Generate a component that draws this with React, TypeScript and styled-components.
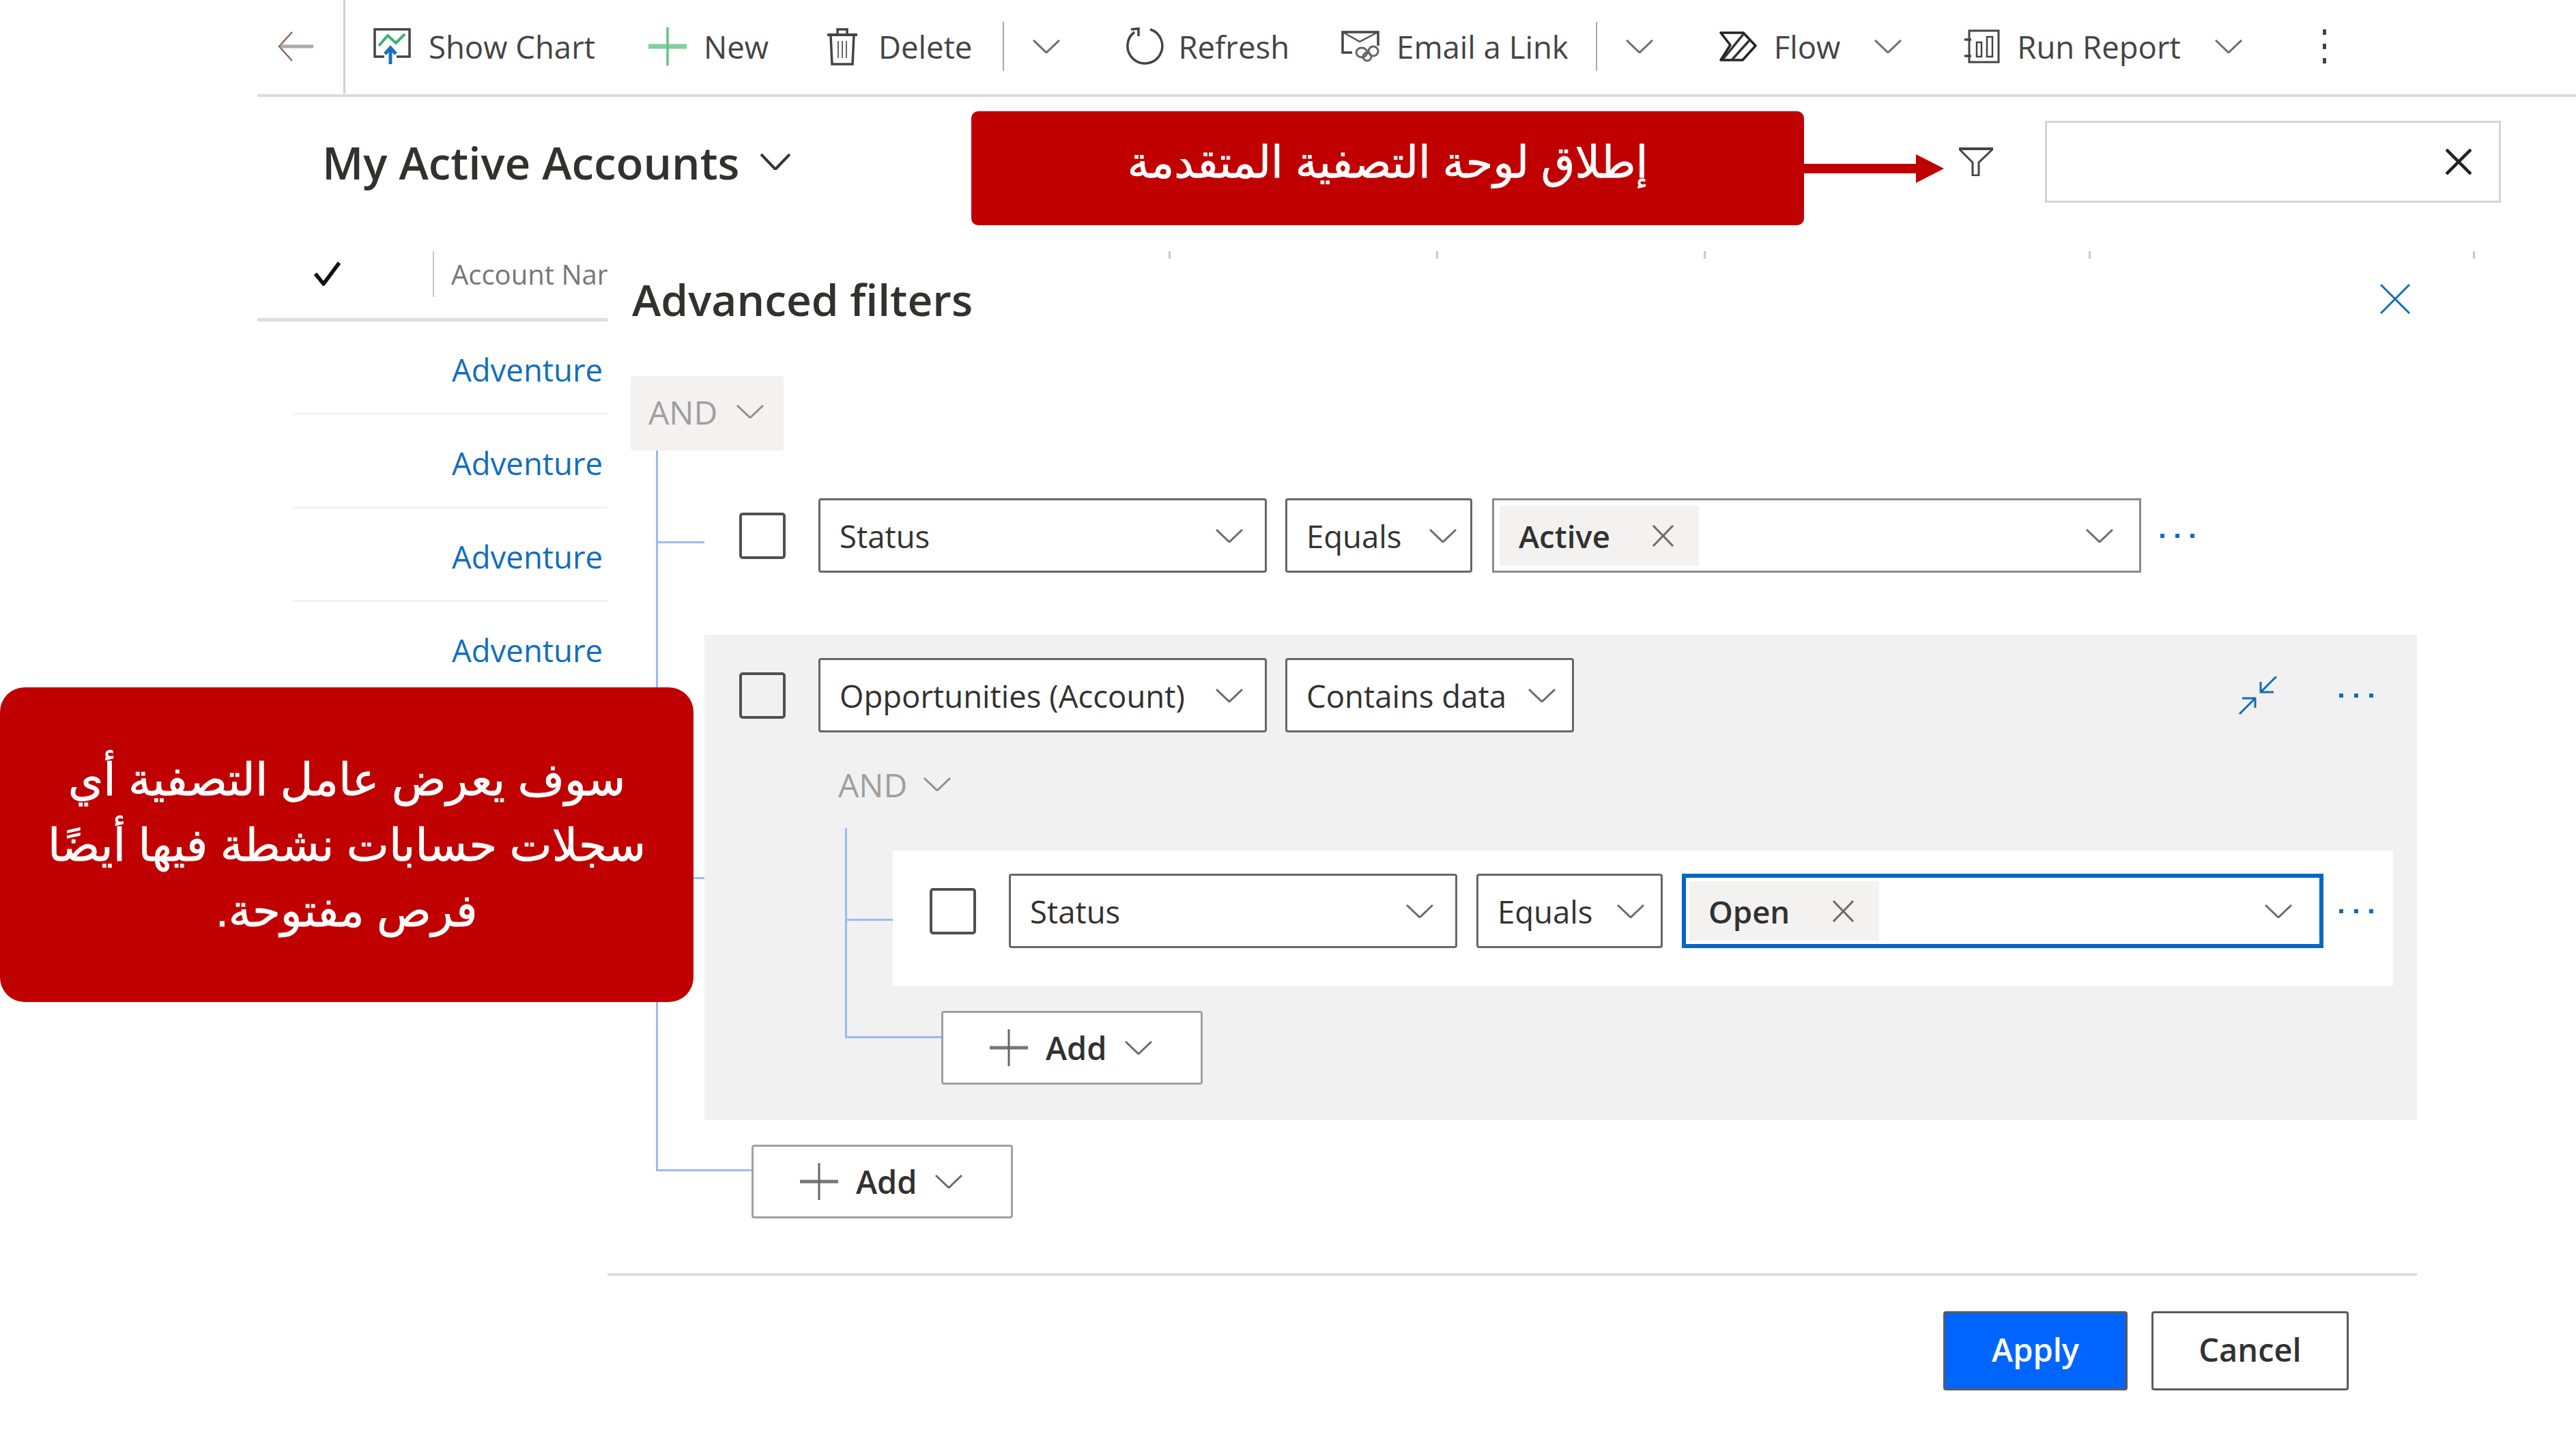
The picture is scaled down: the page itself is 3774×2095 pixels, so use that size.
import styled, { createGlobalStyle } from "styled-components";

const GlobalStyle = createGlobalStyle`
    html, body {
        margin: 0;
        padding: 0;
        background: #fff;
    }
    * {
        box-sizing: border-box;
    }
`;

const UI_FONT = `"Open Sans", "Noto Sans", sans-serif`;
const LINE_BLUE = "#9abaf5";

const Chevron = ({ color = "#6a6a78", w = 40, h = 20, sw = 3 }: { color?: string; w?: number; h?: number; sw?: number }) => (
    <svg width={w} height={h} viewBox={`0 0 ${w} ${h}`} fill="none" style={{ flex: "none" }}>
        <polyline points={`1,1 ${w / 2},${h - 1} ${w - 1},1`} stroke={color} strokeWidth={sw} />
    </svg>
);

const Dots = () => (
    <svg width="50" height="8" viewBox="0 0 50 8" style={{ flex: "none" }}>
        <rect x="0" y="1" width="6" height="6" fill="#0f6cbd" />
        <rect x="22" y="1" width="6" height="6" fill="#0f6cbd" />
        <rect x="44" y="1" width="6" height="6" fill="#0f6cbd" />
    </svg>
);

const ChipX = () => (
    <svg width="33" height="32" viewBox="0 0 33 32" fill="none" style={{ flex: "none" }}>
        <path d="M2 1 L31 31 M31 1 L2 31" stroke="#6b6b6b" strokeWidth="3" />
    </svg>
);

const AddPlus = () => (
    <svg width="56" height="54" viewBox="0 0 56 54" fill="none" style={{ flex: "none" }}>
        <path d="M0 27 H56" stroke="#777" strokeWidth="5" />
        <path d="M28 0 V54" stroke="#666" strokeWidth="3" />
    </svg>
);

const CompressIcon = () => (
    <svg width="58" height="56" viewBox="0 0 58 56" fill="none" style={{ flex: "none" }}>
        <path d="M56 0 L33 23 M33 8 V23 H52" stroke="#0f6cbd" strokeWidth="3" />
        <path d="M2 55 L25 32 M6 32 H25 V46" stroke="#0f6cbd" strokeWidth="3" />
    </svg>
);

const ChartIcon = () => (
    <svg width="56" height="54" viewBox="0 0 56 54" fill="none">
        <path d="M16 42 H2 V2 H53 V42 H34" stroke="#444" strokeWidth="3.5" />
        <path d="M8 26 L21 11 L33 22 L46 9" stroke="#3cb371" strokeWidth="4" />
        <path d="M25 53 V30 M17 38 L25 29 L33 38" stroke="#1a6fc0" strokeWidth="5" />
    </svg>
);

const PlusIcon = () => (
    <svg width="56" height="56" viewBox="0 0 56 56" fill="none">
        <path d="M0 28 H56" stroke="#7fd09c" strokeWidth="7" />
        <path d="M28 0 V56" stroke="#62c486" strokeWidth="3.5" />
    </svg>
);

const TrashIcon = () => (
    <svg width="46" height="56" viewBox="0 0 46 56" fill="none">
        <path d="M1 11 H45" stroke="#444" strokeWidth="4" />
        <path d="M16 11 V3 H30 V11" stroke="#444" strokeWidth="3.5" />
        <path d="M6 11 L8 54 H38 L40 11" stroke="#444" strokeWidth="3.5" />
        <path d="M17 20 V45 M23 20 V45 M29 20 V45" stroke="#666" strokeWidth="2" />
    </svg>
);

const RefreshIcon = () => (
    <svg width="56" height="56" viewBox="0 0 56 56" fill="none">
        <path d="M35 3 A25.5 25.5 0 1 1 12 7" stroke="#444" strokeWidth="3.5" />
        <path d="M7 3 L18 2 V13" stroke="#444" strokeWidth="3.5" />
    </svg>
);

const EmailIcon = () => (
    <svg width="56" height="46" viewBox="0 0 56 46" fill="none">
        <path d="M16 32 H2 V2 H54 V22" stroke="#444" strokeWidth="3.5" />
        <path d="M4 3 L27 16 L52 3" stroke="#555" strokeWidth="2.5" />
        <ellipse cx="30" cy="32" rx="8" ry="7" stroke="#666" strokeWidth="3" />
        <ellipse cx="38" cy="38" rx="6" ry="6" stroke="#666" strokeWidth="3" />
        <ellipse cx="47" cy="30" rx="7" ry="7" stroke="#666" strokeWidth="3" />
    </svg>
);

const FlowIcon = () => (
    <svg width="56" height="46" viewBox="0 0 56 46" fill="none">
        <path d="M3 3 H36 L54 22 L35 43 H3 L17 21 Z" stroke="#222" strokeWidth="3.5" strokeLinejoin="round" />
        <path d="M37 4 L6 42 M46 13 L19 43" stroke="#333" strokeWidth="3.5" />
    </svg>
);

const ReportIcon = () => (
    <svg width="52" height="50" viewBox="0 0 52 50" fill="none">
        <path d="M7 2 H50 V48 H7 Z" stroke="#444" strokeWidth="3" />
        <path d="M0 15 H10 M0 39 H10" stroke="#444" strokeWidth="3.5" />
        <rect x="18" y="19" width="7" height="21" stroke="#444" strokeWidth="2.5" />
        <rect x="33" y="11" width="8" height="29" stroke="#444" strokeWidth="2.5" />
    </svg>
);

const FilterIcon = () => (
    <svg width="52" height="42" viewBox="0 0 52 42" fill="none">
        <path d="M1 2 H51" stroke="#444" strokeWidth="4" />
        <path d="M2 3 L21 22 V41 H30 V22 L50 3" stroke="#444" strokeWidth="3" />
    </svg>
);

const CloseIcon = ({ size, color, sw }: { size: number; color: string; sw: number }) => (
    <svg width={size} height={size} viewBox={`0 0 ${size} ${size}`} fill="none" style={{ flex: "none" }}>
        <path d={`M1 1 L${size - 1} ${size - 1} M${size - 1} 1 L1 ${size - 1}`} stroke={color} strokeWidth={sw} />
    </svg>
);

const CalloutArrow = () => (
    <svg width="205" height="42" viewBox="0 0 205 42">
        <path d="M0 14 H164 V0 L205 21 L164 42 V28 H0 Z" fill="#c00000" />
    </svg>
);

const App = () => {
    return (
        <Page>
            <GlobalStyle />
            <Toolbar>
                <BackButton>
                    <svg width="52" height="44" viewBox="0 0 52 44" fill="none">
                        <path d="M21 1 L2 22 L21 43" stroke="#8a6a5a" strokeWidth="2.5" />
                        <path d="M4 22 H52" stroke="#aaa" strokeWidth="5" />
                    </svg>
                </BackButton>
                <ToolButton $left={41}>
                    <ChartIcon />
                    Show Chart
                </ToolButton>
                <ToolButton $left={78}>
                    <PlusIcon />
                    New
                </ToolButton>
                <ToolButton $left={85} $gap={30}>
                    <TrashIcon />
                    Delete
                </ToolButton>
                <ToolDivider $left={45} />
                <ToolChevron $left={42}>
                    <Chevron />
                </ToolChevron>
                <ToolButton $left={97} $gap={20}>
                    <RefreshIcon />
                    Refresh
                </ToolButton>
                <ToolButton $left={76}>
                    <EmailIcon />
                    Email a Link
                </ToolButton>
                <ToolDivider $left={40} />
                <ToolChevron $left={42}>
                    <Chevron />
                </ToolChevron>
                <ToolButton $left={96}>
                    <FlowIcon />
                    Flow
                </ToolButton>
                <ToolChevron $left={50}>
                    <Chevron />
                </ToolChevron>
                <ToolButton $left={92}>
                    <ReportIcon />
                    Run Report
                </ToolButton>
                <ToolChevron $left={50}>
                    <Chevron />
                </ToolChevron>
                <Kebab>
                    <span />
                    <span />
                    <span />
                </Kebab>
            </Toolbar>

            <ViewBar>
                <ViewTitle>
                    My Active Accounts
                    <Chevron color="#333" w={44} h={24} sw={4} />
                </ViewTitle>
                <FilterButton>
                    <FilterIcon />
                </FilterButton>
                <SearchBox>
                    <CloseIcon size={38} color="#222" sw={4.5} />
                </SearchBox>
            </ViewBar>

            <Workspace>
                <GridColumn>
                    <GridHeader>
                        <CheckCell>
                            <svg width="40" height="36" viewBox="0 0 40 36" fill="none">
                                <path d="M2 18 L14 33 L37 2" stroke="#111" strokeWidth="5.5" />
                            </svg>
                        </CheckCell>
                        <HeaderName>Account Name</HeaderName>
                    </GridHeader>
                    <GridRow>Adventure</GridRow>
                    <GridRow>Adventure</GridRow>
                    <GridRow>Adventure</GridRow>
                    <GridRow>Adventure</GridRow>
                </GridColumn>

                <Panel>
                    <ColumnTicks>
                        <span />
                        <span />
                        <span />
                        <span />
                        <span />
                    </ColumnTicks>
                    <PanelHeader>
                        <PanelTitle>Advanced filters</PanelTitle>
                        <CloseIcon size={44} color="#0f6cbd" sw={3} />
                    </PanelHeader>
                    <AndPill>
                        AND
                        <Chevron color="#8f8f8f" />
                    </AndPill>
                    <Tree>
                        <ConditionRow>
                            <Branch $top={63} $left={-71} $width={71} />
                            <Checkbox />
                            <Select $width={657} $left={48} $pad={32}>
                                Status
                                <Chevron />
                            </Select>
                            <Select $width={274} $left={27} $pad={20}>
                                Equals
                                <Chevron />
                            </Select>
                            <ValuePicker $width={951} $left={29}>
                                <Chip $width={292}>
                                    Active
                                    <ChipX />
                                </Chip>
                                <Chevron />
                            </ValuePicker>
                            <DotsSlot $left={28}>
                                <Dots />
                            </DotsSlot>
                        </ConditionRow>

                        <Group>
                            <Branch $top={355} $left={-71} $width={71} />
                            <GroupRow>
                                <Checkbox />
                                <Select $width={657} $left={48} $pad={32}>
                                    Opportunities (Account)
                                    <Chevron />
                                </Select>
                                <Select $width={423} $left={27} $pad={24}>
                                    Contains data
                                    <Chevron />
                                </Select>
                                <GroupActions>
                                    <CompressIcon />
                                    <Dots />
                                </GroupActions>
                            </GroupRow>
                            <NestedAnd>
                                AND
                                <Chevron color="#8f8f8f" />
                            </NestedAnd>
                            <NestedTree>
                                <NestedRow>
                                    <Branch $top={100} $left={-70} $width={70} />
                                    <Checkbox />
                                    <Select $width={657} $left={48} $pad={32}>
                                        Status
                                        <Chevron />
                                    </Select>
                                    <Select $width={273} $left={28} $pad={24}>
                                        Equals
                                        <Chevron />
                                    </Select>
                                    <ValuePicker $width={940} $left={28} $focused>
                                        <Chip $width={278}>
                                            Open
                                            <ChipX />
                                        </Chip>
                                        <Chevron />
                                    </ValuePicker>
                                    <DotsSlot $left={23}>
                                        <Dots />
                                    </DotsSlot>
                                </NestedRow>
                                <AddButton $left={141}>
                                    <Branch $top={34} $left={-144} $width={141} />
                                    <AddPlus />
                                    Add
                                    <Chevron />
                                </AddButton>
                            </NestedTree>
                        </Group>

                        <AddButton $left={140}>
                            <Branch $top={33} $left={-143} $width={140} />
                            <AddPlus />
                            Add
                            <Chevron />
                        </AddButton>
                    </Tree>
                    <PanelFooter>
                        <ApplyButton>Apply</ApplyButton>
                        <CancelButton>Cancel</CancelButton>
                    </PanelFooter>
                </Panel>
            </Workspace>

            <TopCallout>
                <ArabicText $size={64}>إطلاق لوحة التصفية المتقدمة</ArabicText>
                <ArrowSlot>
                    <CalloutArrow />
                </ArrowSlot>
            </TopCallout>
            <SideCallout>
                <ArabicText $size={66} $lineHeight={96}>
                    سوف يعرض عامل التصفية أي
                    <br />
                    سجلات حسابات نشطة فيها أيضًا
                    <br />
                    فرص مفتوحة.
                </ArabicText>
            </SideCallout>
        </Page>
    );
};

export default App;

const Page = styled.div`
    position: relative;
    width: 3774px;
    height: 2095px;
    overflow: hidden;
    background: #fff;
    color: #323130;
    font-family: ${UI_FONT};
    font-size: 45.5px;
`;

const Toolbar = styled.div`
    display: flex;
    align-items: center;
    height: 142px;
    margin-left: 377px;
    padding-bottom: 2px;
    border-bottom: 4px solid #dcdcdc;
    color: #444;
`;

const BackButton = styled.div`
    display: flex;
    align-items: center;
    width: 129px;
    height: 138px;
    padding-left: 30px;
    border-right: 3px solid #cfcfcf;
`;

const ToolButton = styled.div<{ $left: number; $gap?: number }>`
    display: flex;
    align-items: center;
    gap: ${({ $gap = 25 }) => $gap}px;
    margin-left: ${({ $left }) => $left}px;
    white-space: nowrap;
`;

const ToolDivider = styled.div<{ $left: number }>`
    width: 2px;
    height: 72px;
    margin-left: ${({ $left }) => $left}px;
    background: #aaa;
`;

const ToolChevron = styled.div<{ $left: number }>`
    display: flex;
    margin-left: ${({ $left }) => $left}px;
`;

const Kebab = styled.div`
    display: flex;
    flex-direction: column;
    gap: 13px;
    margin-left: 118px;

    span {
        width: 5px;
        height: 8px;
        background: #444;
    }
`;

const ViewBar = styled.div`
    display: flex;
    align-items: center;
    height: 226px;
    margin-left: 377px;
    padding: 0 110px 36px 95px;
`;

const ViewTitle = styled.div`
    display: flex;
    align-items: center;
    gap: 30px;
    font-size: 65.5px;
    font-weight: 600;
`;

const FilterButton = styled.div`
    display: flex;
    margin-left: auto;
`;

const SearchBox = styled.div`
    display: flex;
    align-items: center;
    justify-content: flex-end;
    width: 668px;
    height: 120px;
    margin-left: 75px;
    padding-right: 40px;
    border: 3px solid #d4d4d4;
`;

const Workspace = styled.div`
    display: flex;
    margin-left: 377px;
`;

const GridColumn = styled.div`
    flex: none;
    width: 513px;
    overflow: hidden;
`;

const GridHeader = styled.div`
    display: flex;
    align-items: center;
    height: 103px;
    padding-bottom: 32px;
    border-bottom: 5px solid #dedede;
`;

const CheckCell = styled.div`
    display: flex;
    flex: none;
    align-items: center;
    width: 259px;
    height: 68px;
    padding-left: 83px;
    border-right: 2px solid #c4c4c4;
`;

const HeaderName = styled.div`
    margin-left: 25px;
    color: #777;
    font-size: 40px;
    white-space: nowrap;
`;

const GridRow = styled.div`
    display: flex;
    align-items: center;
    height: 137px;
    margin-left: 53px;
    padding-left: 232px;
    padding-top: 6px;
    border-bottom: 3px solid #f1f1f1;
    color: #106ebe;
`;

const Panel = styled.div`
    flex: 1;
    min-width: 0;
`;

const ColumnTicks = styled.div`
    display: grid;
    grid-template-columns: 825px 392px 392px 564px 563px;
    height: 11px;

    span {
        border-right: 3px solid #c8c8c8;
    }
`;

const PanelHeader = styled.div`
    display: flex;
    align-items: center;
    justify-content: space-between;
    width: 2641px;
    height: 172px;
    padding: 0 0 54px 36px;
`;

const PanelTitle = styled.div`
    font-size: 64px;
    font-weight: 600;
`;

const AndPill = styled.div`
    display: flex;
    align-items: center;
    gap: 28px;
    width: 224px;
    height: 109px;
    margin-left: 34px;
    padding: 0 0 5px 26px;
    border-radius: 4px;
    background: #f3f2f1;
    color: #a19f9d;
    font-size: 48px;
`;

const Tree = styled.div`
    position: relative;
    margin-left: 71px;
    padding-top: 70px;

    &::before {
        content: "";
        position: absolute;
        left: 0;
        top: 0;
        bottom: 71px;
        width: 3px;
        background: ${LINE_BLUE};
    }
`;

const Branch = styled.div<{ $top: number; $left: number; $width: number }>`
    position: absolute;
    top: ${({ $top }) => $top}px;
    left: ${({ $left }) => $left}px;
    width: ${({ $width }) => $width}px;
    height: 3px;
    background: ${LINE_BLUE};
`;

const ConditionRow = styled.div`
    position: relative;
    display: flex;
    align-items: center;
    height: 109px;
    margin-left: 71px;
    padding-left: 51px;
`;

const Checkbox = styled.div`
    flex: none;
    width: 68px;
    height: 68px;
    border: 4px solid #505050;
    border-radius: 5px;
`;

const Select = styled.div<{ $width: number; $left: number; $pad: number }>`
    display: flex;
    align-items: center;
    justify-content: space-between;
    flex: none;
    width: ${({ $width }) => $width}px;
    height: 109px;
    margin-left: ${({ $left }) => $left}px;
    padding: 0 ${({ $pad }) => $pad}px 0 28px;
    border: 3px solid #666;
    border-radius: 4px;
    background: #fff;
    white-space: nowrap;
`;

const ValuePicker = styled.div<{ $width: number; $left: number; $focused?: boolean }>`
    display: flex;
    align-items: center;
    justify-content: space-between;
    flex: none;
    width: ${({ $width }) => $width}px;
    height: 109px;
    margin-left: ${({ $left }) => $left}px;
    padding: 0 ${({ $focused }) => ($focused ? 40 : 38)}px 0 ${({ $focused }) => ($focused ? 5 : 8)}px;
    border: ${({ $focused }) => ($focused ? "6px solid #0067c5" : "3px solid #8c8c8c")};
    background: #fff;
`;

const Chip = styled.div<{ $width: number }>`
    display: flex;
    align-items: center;
    justify-content: space-between;
    width: ${({ $width }) => $width}px;
    height: 88px;
    padding: 0 36px 0 28px;
    border-radius: 2px;
    background: #f3f2f1;
    font-weight: 600;
`;

const DotsSlot = styled.div<{ $left: number }>`
    display: flex;
    margin-left: ${({ $left }) => $left}px;
`;

const Group = styled.div`
    position: relative;
    width: 2509px;
    margin-top: 91px;
    margin-left: 71px;
    padding: 34px 64px 52px 0;
    background: #f1f1f1;
`;

const GroupRow = styled.div`
    display: flex;
    align-items: center;
    padding-left: 51px;
`;

const GroupActions = styled.div`
    display: flex;
    align-items: center;
    gap: 90px;
    margin-left: auto;
`;

const NestedAnd = styled.div`
    display: flex;
    align-items: center;
    gap: 24px;
    height: 140px;
    margin-left: 196px;
    padding-top: 12px;
    color: #a19f9d;
    font-size: 48px;
`;

const NestedTree = styled.div`
    position: relative;
    width: 2268px;
    margin-left: 206px;
    padding-top: 33px;

    &::before {
        content: "";
        position: absolute;
        left: 0;
        top: 0;
        bottom: 69px;
        width: 3px;
        background: ${LINE_BLUE};
    }
`;

const NestedRow = styled.div`
    position: relative;
    display: flex;
    align-items: center;
    height: 199px;
    margin-left: 70px;
    padding: 0 0 22px 54px;
    background: #fff;
`;

const AddButton = styled.div<{ $left: number }>`
    position: relative;
    display: flex;
    align-items: center;
    gap: 26px;
    width: 383px;
    height: 108px;
    margin-top: 36px;
    margin-left: ${({ $left }) => $left}px;
    padding-left: 68px;
    border: 3px solid #a0a0a0;
    border-radius: 4px;
    background: #fff;
    font-size: 47px;
    font-weight: 600;
`;

const PanelFooter = styled.div`
    display: flex;
    justify-content: flex-end;
    gap: 35px;
    width: 2651px;
    margin-top: 80px;
    padding: 52px 100px 0 0;
    border-top: 4px solid #dcdcdc;
`;

const ApplyButton = styled.div`
    display: flex;
    align-items: center;
    justify-content: center;
    width: 270px;
    height: 116px;
    padding-bottom: 4px;
    border: 3px solid #5a5a5a;
    border-radius: 4px;
    background: #0065ff;
    color: #fff;
    font-size: 47px;
    font-weight: 600;
`;

const CancelButton = styled(ApplyButton)`
    width: 289px;
    background: #fff;
    color: #323130;
`;

const TopCallout = styled.div`
    position: absolute;
    left: 1423px;
    top: 163px;
    display: flex;
    align-items: center;
    justify-content: center;
    width: 1220px;
    height: 167px;
    padding-bottom: 18px;
    border-radius: 10px;
    background: #c00000;
`;

const ArrowSlot = styled.div`
    position: absolute;
    left: 100%;
    top: 63px;
    display: flex;
`;

const SideCallout = styled.div`
    position: absolute;
    left: 0;
    top: 1007px;
    display: flex;
    align-items: center;
    justify-content: center;
    width: 1016px;
    height: 461px;
    border-radius: 36px;
    background: #c00000;
`;

const ArabicText = styled.div<{ $size: number; $lineHeight?: number }>`
    direction: rtl;
    color: #fff;
    font-family: "Liberation Sans", "DejaVu Sans", sans-serif;
    font-size: ${({ $size }) => $size}px;
    line-height: ${({ $lineHeight }) => ($lineHeight ? `${$lineHeight}px` : "normal")};
    text-align: center;
    -webkit-text-stroke: 0.8px #fff;
`;
